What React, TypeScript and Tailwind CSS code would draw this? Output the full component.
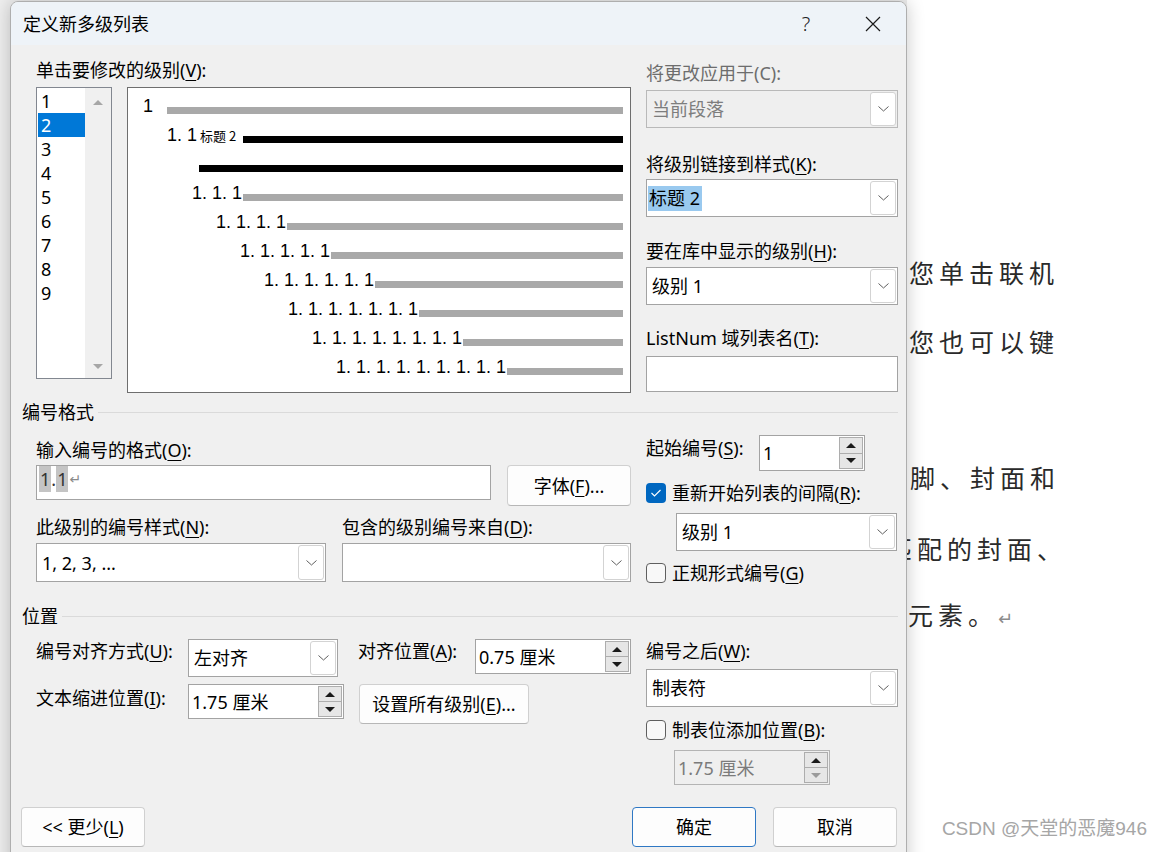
import React from 'react';

const U = ({ c }: { c: string }) => (
  <u className="underline decoration-1 underline-offset-[3px]">{c}</u>
);

function Chevron() {
  return (
    <svg width="11" height="6" viewBox="0 0 11 6">
      <path d="M0.5 0.5 L5.5 5 L10.5 0.5" fill="none" stroke="#5f5f5f" strokeWidth="1" />
    </svg>
  );
}

function Combo({
  children,
  className,
  disabled,
}: {
  children?: React.ReactNode;
  className: string;
  disabled?: boolean;
}) {
  return (
    <div
      className={`flex items-stretch border ${
        disabled ? 'border-[#b9b9b9] bg-[#efefef] text-[#7d7d7d]' : 'border-[#a3a3a3] bg-white text-black'
      } ${className}`}
    >
      <div className="flex min-w-0 flex-1 items-center pl-[5px] leading-[24px]">{children}</div>
      <div className="my-[1px] mr-[1px] flex w-[26px] items-center justify-center rounded-[3px] border border-[#d3d3d3] bg-white">
        <Chevron />
      </div>
    </div>
  );
}

function Tri({ up, color }: { up?: boolean; color: string }) {
  return (
    <svg width="10" height="5" viewBox="0 0 10 5">
      <polygon points={up ? '0,5 5,0 10,5' : '0,0 10,0 5,5'} fill={color} />
    </svg>
  );
}

function Spin({ value, className, disabled }: { value: string; className: string; disabled?: boolean }) {
  return (
    <div
      className={`flex items-stretch border ${
        disabled ? 'border-[#b4b4b4] bg-[#efefef] text-[#7b7b7b]' : 'border-[#a3a3a3] bg-white text-black'
      } ${className}`}
    >
      <div className="flex flex-1 items-center pl-[3px] leading-[24px]">{value}</div>
      <div className="my-[1px] mr-[1px] flex w-[24px] flex-col border border-[#adadad]">
        <div className="flex flex-1 items-center justify-center bg-[#e6e6e6]">
          <Tri up color="#1a1a1a" />
        </div>
        <div className="flex flex-1 items-center justify-center border-t border-[#adadad] bg-[#e6e6e6]">
          <Tri color={disabled ? '#9a9a9a' : '#1a1a1a'} />
        </div>
      </div>
    </div>
  );
}

function Btn({ children, className, focus }: { children: React.ReactNode; className: string; focus?: boolean }) {
  return (
    <div
      className={`flex items-center justify-center rounded-[4px] border bg-[#fdfdfd] leading-[24px] ${
        focus ? 'border-[#2f78c4]' : 'border-[#d0d0d0] border-b-[#b7b7b7]'
      } ${className}`}
    >
      {children}
    </div>
  );
}

function Check({ checked }: { checked?: boolean }) {
  return checked ? (
    <div className="flex h-[20px] w-[20px] shrink-0 items-center justify-center rounded-[4px] bg-[#0067c0]">
      <svg width="12" height="10" viewBox="0 0 12 10">
        <path d="M1.5 5 L4.5 8 L10.5 2" fill="none" stroke="white" strokeWidth="1.1" />
      </svg>
    </div>
  ) : (
    <div className="h-[20px] w-[20px] shrink-0 rounded-[4px] border border-[#5f5f5f] bg-[#f8f8f8]" />
  );
}

const rows = [
  { pl: 'pl-[15px]', w: 'w-[24px]', t: '1', bar: 'bg-[#a9a9a9]' },
  { pl: 'pl-[39px]', w: 'w-[76px]', t: '1. 1', bar: 'bg-black', small: true },
  { pl: 'pl-[71px]', w: 'w-[0px]', t: '', bar: 'bg-black' },
  { pl: 'pl-[64px]', w: 'w-[51px]', t: '1. 1. 1', bar: 'bg-[#a9a9a9]' },
  { pl: 'pl-[88px]', w: 'w-[71px]', t: '1. 1. 1. 1', bar: 'bg-[#a9a9a9]' },
  { pl: 'pl-[112px]', w: 'w-[91px]', t: '1. 1. 1. 1. 1', bar: 'bg-[#a9a9a9]' },
  { pl: 'pl-[136px]', w: 'w-[111px]', t: '1. 1. 1. 1. 1. 1', bar: 'bg-[#a9a9a9]' },
  { pl: 'pl-[160px]', w: 'w-[131px]', t: '1. 1. 1. 1. 1. 1. 1', bar: 'bg-[#a9a9a9]' },
  { pl: 'pl-[184px]', w: 'w-[151px]', t: '1. 1. 1. 1. 1. 1. 1. 1', bar: 'bg-[#a9a9a9]' },
  { pl: 'pl-[208px]', w: 'w-[171px]', t: '1. 1. 1. 1. 1. 1. 1. 1. 1', bar: 'bg-[#a9a9a9]' },
];

export default function App() {
  return (
    <div className="relative flex h-[852px] w-[1163px] overflow-hidden bg-[#eeeeee] font-['Noto_Sans','Noto_Sans_CJK_SC',sans-serif] text-[18px] text-black">
      {/* Dialog */}
      <div className="relative z-10 ml-[10px] mt-[1px] h-[900px] w-[897px] shrink-0 overflow-hidden rounded-t-[8px] border border-[#aeaeae] bg-[#f0f0f0] shadow-[0_0_18px_rgba(0,0,0,0.22)]">
        {/* title bar */}
        <div className="flex h-[43px] items-center bg-[#eef3f8] pl-[12px] pr-[13px]">
          <div className="flex-1 leading-[24px]">定义新多级列表</div>
          <div className="w-[40px] text-center text-[20px] font-light leading-[24px] text-[#222]">?</div>
          <div className="ml-[27px] flex w-[40px] items-center justify-center">
            <svg width="16" height="16" viewBox="0 0 16 16">
              <path d="M1 1 L15 15 M15 1 L1 15" stroke="#1a1a1a" strokeWidth="1.2" fill="none" />
            </svg>
          </div>
        </div>

        {/* body */}
        <div className="w-[887px] pl-[11px]">
          {/* top block */}
          <div className="flex pl-[14px]">
            <div className="flex flex-col">
              <div className="mt-[13px] leading-[24px]">
                单击要修改的级别(<U c="V" />):
              </div>
              <div className="mt-[5px] flex gap-[15px]">
                {/* level list */}
                <div className="flex h-[292px] w-[76px] border border-[#828790] bg-white">
                  <div className="flex w-[48px] flex-col pl-[1px] pt-[1px]">
                    {['1', '2', '3', '4', '5', '6', '7', '8', '9'].map((n) => (
                      <div
                        key={n}
                        className={
                          n === '2'
                            ? 'h-[24px] bg-[#0078d7] pl-[3px] leading-[24px] text-white'
                            : 'h-[24px] pl-[3px] leading-[24px]'
                        }
                      >
                        {n}
                      </div>
                    ))}
                  </div>
                  <div className="flex w-[26px] flex-col items-center justify-between bg-[#f0f0f0] pb-[9px] pt-[12px]">
                    <Tri up color="#a6a6a6" />
                    <Tri color="#a6a6a6" />
                  </div>
                </div>
                {/* preview */}
                <div className="h-[306px] w-[504px] border border-[#6e6e6e] bg-white pr-[7px] pt-[8px]">
                  {rows.map((r, i) => (
                    <div key={i} className={`flex h-[29px] items-center ${r.pl}`}>
                      <div
                        className={`${r.w} mb-[10px] flex shrink-0 items-baseline whitespace-nowrap font-['Liberation_Sans','Noto_Sans_CJK_SC',sans-serif] leading-[24px]`}
                      >
                        <span>{r.t}</span>
                        {r.small && (
                          <span className="ml-[3px] font-['Noto_Sans_CJK_SC',sans-serif] text-[13px] leading-[16px]">
                            标题 2
                          </span>
                        )}
                      </div>
                      <div className={`h-[7px] flex-1 ${r.bar}`} />
                    </div>
                  ))}
                </div>
              </div>
            </div>
            {/* right column */}
            <div className="ml-[15px] flex w-[252px] flex-col">
              <div className="mt-[16px] leading-[24px] text-[#6d6d6d]">将更改应用于(C):</div>
              <Combo className="mt-[5px] h-[38px]" disabled>
                当前段落
              </Combo>
              <div className="mt-[24px] leading-[24px]">
                将级别链接到样式(<U c="K" />):
              </div>
              <Combo className="mt-[3px] h-[38px]">
                <span className="-ml-[4px] bg-[#99c9ef] pl-[1px] pr-[2px] leading-[25px]">标题 2</span>
              </Combo>
              <div className="mt-[22px] leading-[24px]">
                要在库中显示的级别(<U c="H" />):
              </div>
              <Combo className="mt-[4px] h-[38px]">级别 1</Combo>
              <div className="mt-[21px] leading-[24px]">
                ListNum 域列表名(<U c="T" />):
              </div>
              <div className="mt-[6px] h-[36px] border border-[#a3a3a3] bg-white" />
            </div>
          </div>

          {/* 编号格式 header */}
          <div className="mt-[7px] flex h-[24px] w-[876px] items-center">
            <span className="leading-[24px]">编号格式</span>
            <div className="ml-[4px] h-px flex-1 bg-[#dadada]" />
          </div>

          {/* number format block */}
          <div className="flex pl-[14px]">
            <div className="flex w-[595px] flex-col">
              <div className="mt-[14px] leading-[24px]">
                输入编号的格式(<U c="O" />):
              </div>
              <div className="mt-[3px] flex items-start">
                <div className="flex h-[35px] w-[455px] items-start border border-[#a3a3a3] bg-white pl-[2px] leading-[26px] text-[#333]">
                  <span className="bg-[#c4c4c4] px-[1px]">1</span>
                  <span>.</span>
                  <span className="bg-[#c4c4c4] px-[1px]">1</span>
                  <span className="ml-[1px] font-['DejaVu_Sans',sans-serif] text-[14px] leading-[26px] text-[#8a8a8a]">↵</span>
                </div>
                <Btn className="ml-[16px] h-[41px] w-[124px]">
                  字体(<U c="F" />)...
                </Btn>
              </div>
              <div className="mt-[9px] flex">
                <div className="w-[306px] leading-[24px]">
                  此级别的编号样式(<U c="N" />):
                </div>
                <div className="leading-[24px]">
                  包含的级别编号来自(<U c="D" />):
                </div>
              </div>
              <div className="mt-[4px] flex gap-[16px]">
                <Combo className="h-[39px] w-[290px]">1, 2, 3, ...</Combo>
                <Combo className="h-[39px] w-[289px]" />
              </div>
            </div>
            <div className="ml-[15px] flex w-[252px] flex-col">
              <div className="mt-[11px] flex items-start">
                <div className="mt-[1px] w-[113px] leading-[24px]">
                  起始编号(<U c="S" />):
                </div>
                <Spin value=" 1" className="h-[36px] w-[106px]" />
              </div>
              <div className="mt-[10px] flex h-[24px] items-center">
                <Check checked />
                <span className="ml-[6px] leading-[24px]">
                  重新开始列表的间隔(<U c="R" />):
                </span>
              </div>
              <Combo className="ml-[30px] mt-[8px] h-[38px] w-[221px]">级别 1</Combo>
              <div className="mt-[10px] flex h-[24px] items-center">
                <Check />
                <span className="ml-[6px] leading-[24px]">
                  正规形式编号(<U c="G" />)
                </span>
              </div>
            </div>
          </div>

          {/* 位置 header */}
          <div className="mt-[19px] flex h-[24px] w-[876px] items-center">
            <span className="leading-[24px]">位置</span>
            <div className="ml-[4px] h-px flex-1 bg-[#dadada]" />
          </div>

          {/* position block */}
          <div className="flex pl-[14px]">
            <div className="flex w-[595px] flex-col">
              <div className="mt-[11px] flex items-start">
                <div className="w-[152px] leading-[24px]">
                  编号对齐方式(<U c="U" />):
                </div>
                <Combo className="h-[38px] w-[150px]">左对齐</Combo>
                <div className="ml-[20px] w-[117px] leading-[24px]">
                  对齐位置(<U c="A" />):
                </div>
                <Spin value="0.75 厘米" className="h-[35px] w-[156px]" />
              </div>
              <div className="mt-[7px] flex items-start">
                <div className="mt-[2px] w-[152px] leading-[24px]">
                  文本缩进位置(<U c="I" />):
                </div>
                <Spin value="1.75 厘米" className="h-[35px] w-[156px]" />
                <Btn className="ml-[15px] h-[40px] w-[170px]">
                  设置所有级别(<U c="E" />)...
                </Btn>
              </div>
            </div>
            <div className="ml-[15px] flex w-[252px] flex-col">
              <div className="mt-[11px] leading-[24px]">
                编号之后(<U c="W" />):
              </div>
              <Combo className="mt-[6px] h-[38px]">制表符</Combo>
              <div className="mt-[11px] flex h-[24px] items-center">
                <Check />
                <span className="ml-[6px] leading-[24px]">
                  制表位添加位置(<U c="B" />):
                </span>
              </div>
              <Spin value="1.75 厘米" className="ml-[28px] mt-[8px] h-[35px] w-[156px]" disabled />
            </div>
          </div>

          {/* bottom buttons */}
          <div className="mt-[22px] flex w-[876px] justify-between">
            <Btn className="-ml-[1px] h-[40px] w-[124px]">
              &lt;&lt; 更少(<U c="L" />)
            </Btn>
            <div className="mr-[1px] flex gap-[17px]">
              <Btn className="h-[40px] w-[124px]" focus>
                确定
              </Btn>
              <Btn className="h-[40px] w-[124px]">取消</Btn>
            </div>
          </div>
        </div>
      </div>

      {/* document behind */}
      <div className="relative flex-1 overflow-hidden bg-white font-['Noto_Sans_CJK_SC',sans-serif] text-[25px] tracking-[5px] text-[#2a2a2a]">
        <div className="flex flex-col pt-[255px]">
          <div className="ml-[2px] h-[34px] whitespace-nowrap leading-[34px]">您单击联机</div>
          <div className="ml-[2px] mt-[35px] h-[34px] whitespace-nowrap leading-[34px]">您也可以键</div>
          <div className="ml-[3px] mt-[102px] h-[34px] whitespace-nowrap leading-[34px]">脚、封面和</div>
          <div className="ml-[5px] mt-[37px] flex h-[34px] items-center whitespace-nowrap leading-[34px]">
            <span className="-ml-[25px]">匹</span>
            <span>配的封面、</span>
          </div>
          <div className="ml-[1px] mt-[32px] h-[34px] whitespace-nowrap leading-[34px]">
            元素。<span className="font-['DejaVu_Sans',sans-serif] text-[18px] text-[#8c8c8c]">↵</span>
          </div>
        </div>
      </div>

      {/* watermark */}
      <div className="absolute bottom-[11px] right-[16px] z-20 font-['Liberation_Sans','Noto_Sans_CJK_SC',sans-serif] text-[19px] leading-[24px] text-[#a6a6a6] [text-shadow:0_0_1px_#ffffff]">
        CSDN @天堂的恶魔946
      </div>
    </div>
  );
}
